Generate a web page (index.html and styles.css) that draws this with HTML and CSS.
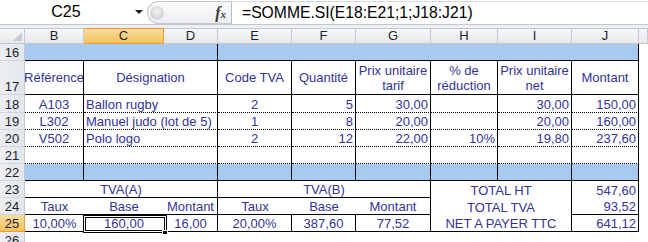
FILE: index.html
```html
<!DOCTYPE html>
<html lang="fr">
<head>
<meta charset="utf-8">
<title>Facture</title>
<link rel="stylesheet" href="styles.css">
</head>
<body>
<div class="fbar">
  <div class="namebox"><span class="nb-text">C25</span><span class="nb-arrow"></span></div>
  <div class="fxzone"><span class="knob"></span><span class="fx">f<span class="fx-x">x</span></span></div>
  <div class="formula">=SOMME.SI(E18:E21;1;J18:J21)</div>
</div>
<div class="band"></div>
<div class="sheet">
  <div class="corner"><span class="tri"></span></div>
  <div class="ch">B</div><div class="ch selh">C</div><div class="ch">D</div><div class="ch">E</div><div class="ch">F</div><div class="ch">G</div><div class="ch">H</div><div class="ch">I</div><div class="ch">J</div><div class="ch"></div>

  <div class="rh">16</div>
  <div class="c blue r b s3"></div><div class="c blue r b s6"></div><div class="c"></div>

  <div class="rh">17</div>
  <div class="c m r b">Référence</div>
  <div class="c m r b s2">Désignation</div>
  <div class="c m r b">Code TVA</div>
  <div class="c m r b">Quantité</div>
  <div class="c m r b">Prix unitaire<br>tarif</div>
  <div class="c m r b">% de<br>réduction</div>
  <div class="c m r b">Prix unitaire<br>net</div>
  <div class="c m r b">Montant</div>
  <div class="c"></div>

  <div class="rh">18</div>
  <div class="c ctr r d">A103</div><div class="c lt r d s2">Ballon rugby</div><div class="c ctr r d">2</div><div class="c rt r d">5</div><div class="c rt r d">30,00</div><div class="c rt r d"></div><div class="c rt r d">30,00</div><div class="c rt r d">150,00</div><div class="c"></div>

  <div class="rh">19</div>
  <div class="c ctr r d">L302</div><div class="c lt r d s2">Manuel judo (lot de 5)</div><div class="c ctr r d">1</div><div class="c rt r d">8</div><div class="c rt r d">20,00</div><div class="c rt r d"></div><div class="c rt r d">20,00</div><div class="c rt r d">160,00</div><div class="c"></div>

  <div class="rh">20</div>
  <div class="c ctr r d">V502</div><div class="c lt r d s2">Polo logo</div><div class="c ctr r d">2</div><div class="c rt r d">12</div><div class="c rt r d">22,00</div><div class="c rt r d">10%</div><div class="c rt r d">19,80</div><div class="c rt r d">237,60</div><div class="c"></div>

  <div class="rh">21</div>
  <div class="c r d"></div><div class="c r d s2"></div><div class="c r d"></div><div class="c r d"></div><div class="c r d"></div><div class="c r d"></div><div class="c r d"></div><div class="c r d"></div><div class="c"></div>

  <div class="rh">22</div>
  <div class="c blue r b"></div><div class="c blue r b s2"></div><div class="c blue r b"></div><div class="c blue r b"></div><div class="c blue r b"></div><div class="c blue r b"></div><div class="c blue r b"></div><div class="c blue r b"></div><div class="c"></div>

  <div class="rh">23</div>
  <div class="c ctr r b s3">TVA(A)</div><div class="c ctr r b s3">TVA(B)</div><div class="c ctr r s2">TOTAL HT</div><div class="c rt r">547,60</div><div class="c"></div>

  <div class="rh">24</div>
  <div class="c ctr b">Taux</div><div class="c ctr b">Base</div><div class="c ctr r b">Montant</div><div class="c ctr b">Taux</div><div class="c ctr b">Base</div><div class="c ctr r b">Montant</div><div class="c ctr r s2">TOTAL TVA</div><div class="c rt r b">93,52</div><div class="c"></div>

  <div class="rh selh">25</div>
  <div class="c ctr b">10,00%</div><div class="c ctr b selc">160,00<span class="handle"></span></div><div class="c ctr r b">16,00</div><div class="c ctr r b">20,00%</div><div class="c ctr r b">387,60</div><div class="c ctr r b">77,52</div><div class="c ctr r b s2">NET A PAYER TTC</div><div class="c rt r b">641,12</div><div class="c"></div>

  <div class="rh">26</div>
  <div class="c s10"></div>
</div>
</body>
</html>
```
FILE: styles.css
```css
* { box-sizing: border-box; margin: 0; padding: 0; }
html, body { width: 648px; height: 242px; overflow: hidden; background: #fff; }
body { font-family: "Liberation Sans", Arial, sans-serif; }

.fbar { display: flex; height: 25px; border-bottom: 1px solid #c4c8cd; background: #fff; }
.namebox { width: 147px; display: flex; align-items: center; }
.nb-text { width: 132px; text-align: center; font-size: 16px; color: #000; }
.nb-arrow { width: 0; height: 0; border-left: 4px solid transparent; border-right: 4px solid transparent; border-top: 4px solid #1e1e1e; margin-left: 3px; }
.fxzone { width: 84px; display: flex; align-items: center; justify-content: space-between; margin-top: 1px; height: 23px; border: 1px solid #c5c8cc; border-right: none; border-radius: 12px 0 0 12px; background: linear-gradient(#fdfdfd, #eceef0); padding: 0 5px 0 2px; }
.knob { width: 14px; height: 14px; border-radius: 50%; background: radial-gradient(circle at 50% 40%, #f4f4f4 0, #d4d6d8 60%, #e6e7e9 100%); }
.fx { font-family: "Liberation Serif", serif; font-style: italic; font-weight: bold; font-size: 16px; color: #3a3a3a; }
.fx-x { font-size: 11px; }
.formula { flex: 1; margin-top: 1px; height: 23px; border-left: 1px solid #b9bdc2; border-top: 1px solid #d6d9dc; background: #fff; font-size: 15.7px; color: #000; padding-left: 10px; line-height: 21px; }
.band { height: 3px; background: #eef0f3; }

.sheet { display: grid; grid-template-columns: 25px 59px 80px 54px 74px 64px 75px 67px 74px 67px 9px; grid-template-rows: 16px 17px 34px 18px 17px 17px 17px 17px 17px 17px 17px 17px; font-size: 13px; color: #333399; }

.corner { background: linear-gradient(#f7f8f9, #e6e8eb); border-right: 1px solid #c5c9ce; border-bottom: 1px solid #c5c9ce; border-top: 1px solid #c5c9ce; position: relative; }
.tri { position: absolute; right: 2px; bottom: 2px; width: 0; height: 0; border-left: 9px solid transparent; border-bottom: 9px solid #c8cbcf; }
.ch { background: linear-gradient(#f7f8f9, #e6e8eb); border-right: 1px solid #c5c9ce; border-bottom: 1px solid #c5c9ce; border-top: 1px solid #c5c9ce; color: #1f1f2f; font-size: 13px; text-align: center; line-height: 14px; }
.rh { background: linear-gradient(90deg, #eceef1, #e3e6ea); border-right: 1px solid #c5c9ce; border-bottom: 1px solid #d2d5d9; color: #1f1f2f; font-size: 13px; display: flex; align-items: flex-end; justify-content: center; line-height: 15px; }
.ch.selh, .rh.selh { background: linear-gradient(#f9dc9f, #f2c25e); border-color: #f29a37; }
.rh.selh { border-right: 1px solid #f29a37; border-bottom: 1px solid #f29a37; }

.c { display: flex; align-items: flex-end; line-height: 15px; white-space: nowrap; overflow: hidden; }
.ctr { justify-content: center; }
.rt { justify-content: flex-end; padding-right: 2px; }
.lt { padding-left: 2px; }
.m { align-items: center; justify-content: center; text-align: center; }
.r { border-right: 1px solid #000; }
.b { border-bottom: 1px solid #000; }
.d { border-bottom: 1px dotted #000; }
.blue { background: #a6caf0; }
.s2 { grid-column: span 2; }
.s3 { grid-column: span 3; }
.s6 { grid-column: span 6; }
.s10 { grid-column: span 10; }

.selc { position: relative; overflow: visible; }
.selc::after { content: ""; position: absolute; left: -1px; top: 0; right: -3px; bottom: -2px; border: 1px solid #000; box-shadow: inset 0 0 0 1px #fff, inset 0 0 0 2px #000; pointer-events: none; }
.handle { position: absolute; right: -4px; bottom: -4px; width: 6px; height: 5px; background: #000; border: 1px solid #fff; z-index: 2; }
```
